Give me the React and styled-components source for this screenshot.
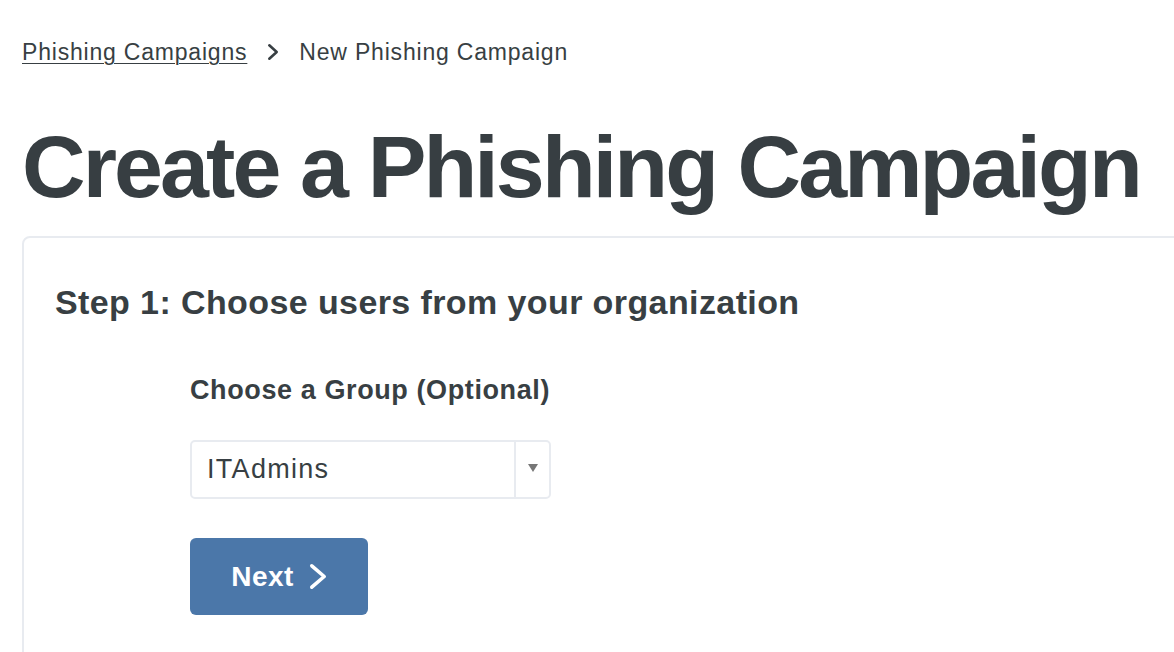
import styled, { createGlobalStyle } from 'styled-components'

const GlobalStyle = createGlobalStyle`
  html, body {
    margin: 0;
    padding: 0;
    background: #fff;
    overflow: hidden;
  }
  body {
    font-family: "Liberation Sans", Arial, sans-serif;
    color: #383f43;
  }
`

const Page = styled.div`
  width: 1174px;
  height: 652px;
  padding: 38px 0 0 22px;
  box-sizing: border-box;
  overflow: hidden;
`

const Breadcrumb = styled.nav`
  display: flex;
  align-items: center;
  gap: 20px;
  font-size: 23px;
  line-height: 28px;
  letter-spacing: 0.8px;
  color: #383f43;
`

const CrumbLink = styled.a`
  color: #383f43;
  text-decoration: underline;
  text-underline-offset: 3px;
  text-decoration-thickness: 1px;
`

const Title = styled.h1`
  margin: 51px 0 19px 0;
  font-size: 88px;
  line-height: 100px;
  font-weight: 700;
  letter-spacing: -2.9px;
  color: #373e42;
  white-space: nowrap;
`

const Card = styled.section`
  width: 1300px;
  height: 500px;
  border: 2px solid #e8ebf0;
  border-radius: 8px;
  box-sizing: border-box;
  padding: 46px 0 0 31px;
`

const StepTitle = styled.h2`
  margin: 0;
  font-size: 34px;
  line-height: 36px;
  font-weight: 700;
  letter-spacing: 0.4px;
  color: #383f43;
`

const Form = styled.div`
  margin: 55px 0 0 135px;
  display: flex;
  flex-direction: column;
  align-items: flex-start;
`

const Label = styled.label`
  font-size: 27px;
  line-height: 30px;
  font-weight: 700;
  letter-spacing: 0.6px;
  color: #383f43;
`

const Select = styled.div`
  margin-top: 35px;
  width: 361px;
  height: 59px;
  border: 2px solid #e8ebf0;
  border-radius: 5px;
  box-sizing: border-box;
  display: flex;
  align-items: stretch;
`

const SelectValue = styled.div`
  flex: 1;
  display: flex;
  align-items: center;
  padding-left: 15px;
  font-size: 27px;
  letter-spacing: 1.3px;
  color: #383f43;
`

const SelectToggle = styled.div`
  width: 33px;
  border-left: 2px solid #e8ebf0;
  display: flex;
  align-items: center;
  justify-content: center;
`

const Caret = styled.span`
  width: 0;
  height: 0;
  border-left: 5px solid transparent;
  border-right: 5px solid transparent;
  border-top: 8px solid #777;
  margin-top: -4px;
`

const Button = styled.button`
  margin-top: 39px;
  width: 178px;
  height: 77px;
  border: none;
  border-radius: 6px;
  background: #4b77a9;
  color: #fff;
  font-family: "Liberation Sans", Arial, sans-serif;
  font-size: 28px;
  font-weight: 700;
  letter-spacing: 0.4px;
  display: flex;
  align-items: center;
  justify-content: center;
  gap: 15px;
  padding: 0;
  cursor: pointer;
`

function Chevron({ w, h, stroke, width }) {
  return (
    <svg width={w} height={h} viewBox={`0 0 ${w} ${h}`} fill="none">
      <path
        d={`M${width / 2 + 1} ${width / 2 + 1} L${w - width / 2 - 1} ${h / 2} L${width / 2 + 1} ${h - width / 2 - 1}`}
        stroke={stroke}
        strokeWidth={width}
        strokeLinecap="round"
        strokeLinejoin="round"
      />
    </svg>
  )
}

export default function App() {
  return (
    <>
      <GlobalStyle />
      <Page>
        <Breadcrumb>
          <CrumbLink href="#">Phishing Campaigns</CrumbLink>
          <Chevron w={12} h={18} stroke="#383f43" width={2.6} />
          <span>New Phishing Campaign</span>
        </Breadcrumb>
        <Title>Create a Phishing Campaign</Title>
        <Card>
          <StepTitle>Step 1: Choose users from your organization</StepTitle>
          <Form>
            <Label>Choose a Group (Optional)</Label>
            <Select>
              <SelectValue>ITAdmins</SelectValue>
              <SelectToggle>
                <Caret />
              </SelectToggle>
            </Select>
            <Button>
              Next
              <Chevron w={18} h={27} stroke="#fff" width={3.6} />
            </Button>
          </Form>
        </Card>
      </Page>
    </>
  )
}
